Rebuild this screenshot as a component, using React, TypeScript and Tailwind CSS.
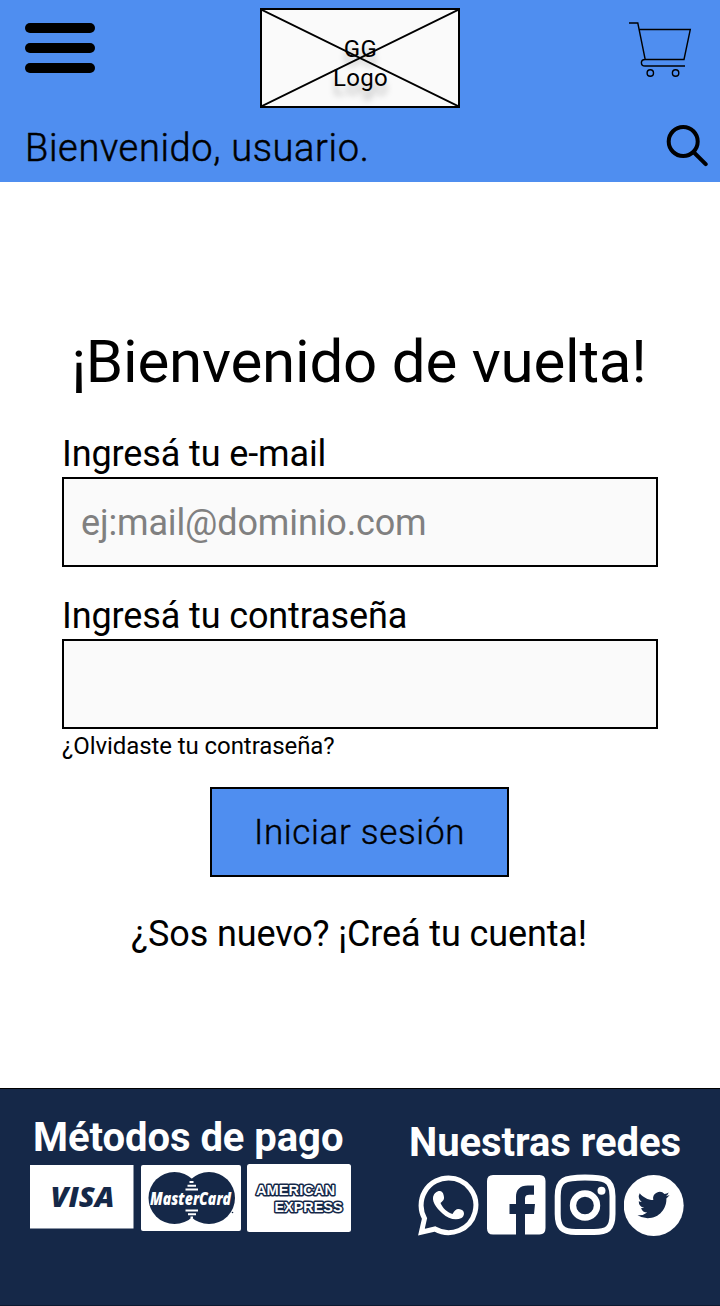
import React from "react";

function MenuIcon() {
  return (
    <div className="flex h-[50px] w-[70px] flex-col justify-between">
      <span className="h-[10px] rounded-full bg-black" />
      <span className="h-[10px] rounded-full bg-black" />
      <span className="h-[10px] rounded-full bg-black" />
    </div>
  );
}

function Logo() {
  return (
    <div className="relative flex h-[100px] w-[200px] flex-col items-center justify-center border-2 border-black bg-[#fafafa] pt-[12px] pl-px text-[24px] leading-[29px] tracking-[0.35px] [text-shadow:0_9px_6px_rgba(0,0,0,0.25)]">
      <svg className="absolute inset-0" width="196" height="96" viewBox="0 0 196 96" stroke="#000" strokeWidth="2">
        <path d="M0 0L196 96M196 0L0 96" />
      </svg>
      <span>GG</span>
      <span>Logo</span>
    </div>
  );
}

function CartIcon() {
  return (
    <svg width="63" height="57" viewBox="0 0 63 57" fill="none" stroke="#000" strokeWidth="1.4">
      <path d="M0 2H8.8L16.2 38.5M10.3 8.5H61.3L55 38.5H16C11.2 38.5 11.2 45 16 45H56" />
      <circle cx="21.3" cy="52" r="3.2" />
      <circle cx="46.6" cy="52" r="3.2" />
    </svg>
  );
}

function SearchIcon() {
  return (
    <svg width="42" height="42" viewBox="0 0 42 42" fill="none" stroke="#000">
      <circle cx="17.2" cy="16.5" r="14.5" strokeWidth="4" />
      <path d="M28 27.5L39.7 39.2" strokeWidth="4" strokeLinecap="round" />
    </svg>
  );
}

function VisaCard() {
  return (
    <svg width="104" height="64" viewBox="0 0 104 64">
      <rect width="103.5" height="63.5" fill="#fff" />
      <text x="20.5" y="42" fontFamily="Open Sans" fontStyle="italic" fontWeight="800" fontSize="29" textLength="64" lengthAdjust="spacingAndGlyphs" fill="#152848">VISA</text>
    </svg>
  );
}

function MasterCard() {
  return (
    <svg width="100" height="66" viewBox="0 0 100 66">
      <rect width="100" height="66" rx="2" fill="#fff" />
      <g fill="#152848">
        <circle cx="33.5" cy="33" r="26" />
        <circle cx="68" cy="33" r="26" />
        <circle cx="91.5" cy="47.5" r="0.8" />
      </g>
      <path d="M48.5 17h4M46.5 20.7h8.5M44.5 24.5h12.5M44.5 45.5h12.5M47 49.2h8M49.5 52.5h2.5" stroke="#fff" strokeWidth="2" />
      <text x="9" y="39.5" fontFamily="Open Sans" fontStyle="italic" fontWeight="800" fontSize="17.5" textLength="81" lengthAdjust="spacingAndGlyphs" fill="#fff" stroke="#152848" strokeWidth="1.2" paintOrder="stroke">MasterCard</text>
    </svg>
  );
}

function AmexCard() {
  return (
    <svg width="105" height="69" viewBox="0 0 105 69" fontFamily="Liberation Sans" fontWeight="700" fontSize="14.5">
      <rect width="104" height="68" rx="2.5" fill="#fff" />
      <g fill="#fff" stroke="#152848" strokeWidth="3" strokeLinejoin="round" paintOrder="stroke">
        <text x="9" y="31" textLength="79" lengthAdjust="spacingAndGlyphs">AMERICAN</text>
        <text x="27.5" y="48" textLength="68" lengthAdjust="spacingAndGlyphs">EXPRESS</text>
      </g>
    </svg>
  );
}

function WhatsAppIcon() {
  return (
    <svg width="61" height="61" viewBox="0 0 61 61">
      <path d="M30.5 3A27.3 27.3 0 1 1 17 54L3.4 57.2L6.5 43.5A27.3 27.3 0 0 1 30.5 3Z" fill="none" stroke="#fff" strokeWidth="5" />
      <path d="M19.5 16.5C23 15.3 25 17 25.7 20.5C26.5 24 26 25 22.5 28C24.5 33 29 37 34.5 39C37.5 34 39.5 32.8 44 35C47 37 46.5 41 43.5 43C37.5 46 30 43.5 24.5 38.5C18 33 12.5 25 16 19.5C17 18 18 17 19.5 16.5Z" fill="#fff" />
    </svg>
  );
}

function FacebookIcon() {
  return (
    <svg width="59" height="60" viewBox="0 0 59 60" fill="#fff">
      <path d="M6 0H52.5Q58.5 0 58.5 6V53Q58.5 59.5 52.5 59.5H38V39H47L48 29H38V23.5C38 20.5 39.5 19.7 42.5 19.7H47V10.5H41C32.5 10.5 29 15 29 22V29H22.5V39H29V59.5H6Q0 59.5 0 53.5V6Q0 0 6 0Z" />
    </svg>
  );
}

function InstagramIcon() {
  return (
    <svg width="62" height="62" viewBox="0 0 62 62" fill="none" stroke="#fff">
      <path d="M31 3.5C49 3.5 58.5 4 58.5 22V40C58.5 55 53 58 40 58H22C8 58 3.7 53 3.7 40V22C3.7 6 10 3.5 31 3.5Z" strokeWidth="6" />
      <circle cx="31" cy="31.5" r="12" strokeWidth="6.4" />
      <circle cx="47.5" cy="16.7" r="4" fill="#fff" stroke="none" />
    </svg>
  );
}

function TwitterIcon() {
  return (
    <svg width="60" height="61" viewBox="0 0 60 61">
      <ellipse cx="29.7" cy="30.5" rx="30" ry="30.5" fill="#fff" />
      <g transform="translate(13.5 14) scale(1.34)">
        <path fill="#152848" d="M23.95 4.57a10 10 0 0 1-2.82.77 4.96 4.96 0 0 0 2.16-2.72c-.95.55-2 .95-3.13 1.18a4.92 4.92 0 0 0-8.38 4.48C7.69 8.1 4.07 6.13 1.64 3.16a4.92 4.92 0 0 0 1.52 6.57 4.9 4.9 0 0 1-2.23-.61v.06a4.92 4.92 0 0 0 3.95 4.83 5 5 0 0 1-2.21.08 4.94 4.94 0 0 0 4.6 3.42A9.87 9.87 0 0 1 0 19.54a14 14 0 0 0 7.55 2.21c9.05 0 14-7.5 14-13.98 0-.21 0-.42-.02-.63a9.94 9.94 0 0 0 2.42-2.57z" />
      </g>
    </svg>
  );
}

export default function App() {
  return (
    <div className="flex h-[1306px] w-[720px] flex-col overflow-hidden bg-white font-['Roboto',sans-serif] text-black">
      <header className="flex h-[182px] shrink-0 flex-col bg-[#4f8ef0] pt-[8px]">
        <div className="grid h-[100px] grid-cols-[1fr_200px_1fr]">
          <div className="pt-[15px] pl-[25px]"><MenuIcon /></div>
          <Logo />
          <div className="flex justify-end pt-[13px] pr-[28px]"><CartIcon /></div>
        </div>
        <div className="flex items-start justify-between pt-[17px] pr-[12px] pl-[25px]">
          <p className="pt-[2px] text-[38px] leading-[42px] font-light tracking-[0.64px] whitespace-nowrap [-webkit-text-stroke:0.5px_black]">Bienvenido, usuario.</p>
          <SearchIcon />
        </div>
      </header>

      <main className="flex h-[906px] shrink-0 flex-col items-center px-[62px] pt-[145px]">
        <h1 className="pr-[2px] text-[60px] leading-[70px] tracking-[-0.2px] whitespace-nowrap">¡Bienvenido de vuelta!</h1>
        <form className="flex w-full flex-col pt-[36px]">
          <label htmlFor="email" className="h-[44px] text-[36px] leading-[42px] tracking-[-0.12px]">Ingresá tu e-mail</label>
          <input id="email" type="email" placeholder="ej:mail@dominio.com" className="h-[90px] w-full border-2 border-black bg-[#fafafa] px-[17px] pt-[2px] text-[36px] tracking-[-0.14px] placeholder:text-[#808080] placeholder:opacity-100" />
          <label htmlFor="password" className="mt-[28px] h-[44px] text-[36px] leading-[42px] tracking-[-0.12px]">Ingresá tu contraseña</label>
          <input id="password" type="password" className="h-[90px] w-full border-2 border-black bg-[#fafafa] px-[17px] text-[36px]" />
          <a className="pt-[3px] text-[24px] leading-[28px] tracking-[-0.08px]">¿Olvidaste tu contraseña?</a>
          <button type="button" className="mt-[27px] mr-px h-[90px] w-[299px] self-center border-2 border-black bg-[#4f8ef0] pt-px text-[35px] leading-[42px] font-light tracking-[0.68px] [-webkit-text-stroke:0.4px_black]">Iniciar sesión</button>
        </form>
        <p className="pt-[36px] pr-[2px] text-[36px] leading-[42px] tracking-[-0.12px] whitespace-nowrap">¿Sos nuevo? ¡Creá tu cuenta!</p>
      </main>

      <footer className="flex h-[218px] shrink-0 items-start justify-between border-y border-t-black border-b-[#0c1930] bg-[#152848] pr-[36px] pl-[30px] text-white">
        <section className="pt-[27px]">
          <h2 className="h-[44px] pl-[3px] text-[40px] leading-[44px] font-bold tracking-[-0.05px] whitespace-nowrap">Métodos de pago</h2>
          <div className="flex items-start pt-[4px]">
            <div className="pt-px"><VisaCard /></div>
            <div className="pt-px pl-[7px]"><MasterCard /></div>
            <div className="pl-[6px]"><AmexCard /></div>
          </div>
        </section>
        <section className="w-[275px] pt-[32px]">
          <h2 className="text-[40px] leading-[44px] font-bold tracking-[-0.05px] whitespace-nowrap">Nuestras redes</h2>
          <div className="flex items-start gap-[8px] pt-[9px] pl-[9px]">
            <div className="pt-px"><WhatsAppIcon /></div>
            <div className="pt-px"><FacebookIcon /></div>
            <InstagramIcon />
            <div className="pt-px"><TwitterIcon /></div>
          </div>
        </section>
      </footer>
    </div>
  );
}
